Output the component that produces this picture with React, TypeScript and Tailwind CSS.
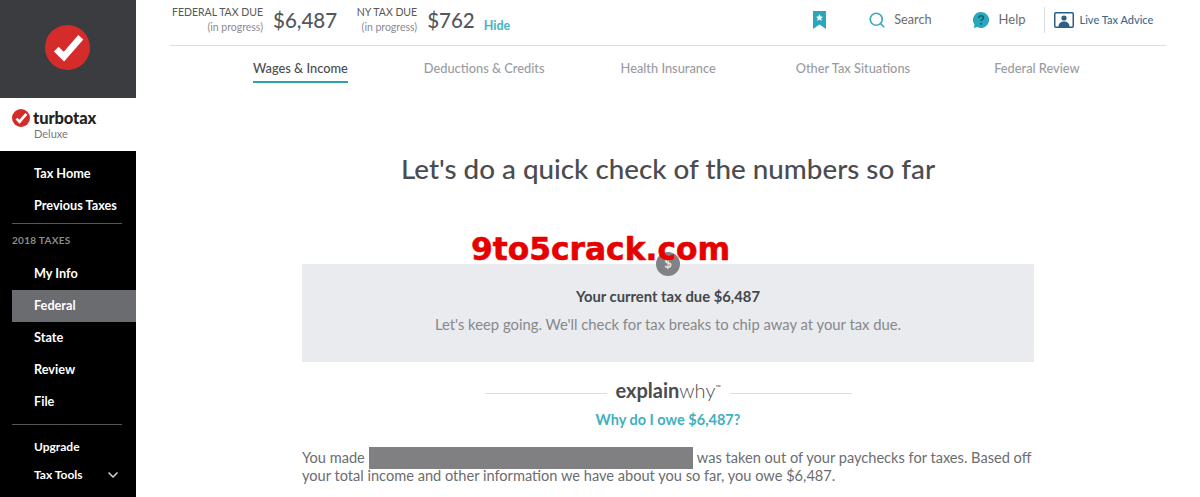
import { ChevronDown, Search } from 'lucide-react';

const font = { lato: 'font-["Lato","Noto_Sans",sans-serif]' };

function CheckBadge({ className }: { className: string }) {
  return (
    <svg className={className} viewBox="0 0 44 44">
      <circle cx="22" cy="22" r="22" fill="#d52b2b" />
      <path d="M11 23.5 L18.5 31 L35 12" fill="none" stroke="#fff" strokeWidth="6.5" />
    </svg>
  );
}

function NavItem({ label, active }: { label: string; active?: boolean }) {
  return (
    <div className={`ml-3 flex h-8 items-center pl-[22px] text-[12.7px] font-bold text-white ${active ? 'bg-[#6b6c70]' : ''}`}>
      {label}
    </div>
  );
}

function Sidebar() {
  return (
    <aside className="flex h-[497px] w-[136px] shrink-0 flex-col bg-black">
      <div className="flex h-[98px] items-center justify-center bg-[#3b3c3f] pb-[3px] pr-[2px]">
        <CheckBadge className="h-[45px] w-[45px]" />
      </div>
      <div className="h-[53px] bg-white pl-3 pt-[11px]">
        <div className="flex items-center gap-[3px]">
          <CheckBadge className="h-[18px] w-[18px]" />
          <span className="text-[16.5px] leading-[18px] font-black tracking-[-0.1px] text-[#222]">turbotax</span>
        </div>
        <div className="pl-[22px] text-[11px] leading-[13px] text-[#77797c]">Deluxe</div>
      </div>
      <nav className="pt-[7px]">
        <NavItem label="Tax Home" />
        <NavItem label="Previous Taxes" />
        <div className="ml-3 mr-3.5 mt-px h-px bg-[#55565a]" />
        <div className="ml-3 mt-[7px] h-[19px] text-[10px] leading-[19px] font-bold tracking-[0.3px] text-[#8b8c8f]">2018 TAXES</div>
        <div className="mt-2">
          <NavItem label="My Info" />
          <NavItem label="Federal" active />
          <NavItem label="State" />
          <NavItem label="Review" />
          <NavItem label="File" />
        </div>
        <div className="ml-3 mr-3.5 mt-[6px] h-px bg-[#55565a]" />
        <div className="mt-2 flex h-7 items-center pl-[34px] text-xs font-bold text-white">Upgrade</div>
        <div className="flex h-7 items-center justify-between pl-[34px] pr-[15px] text-xs font-bold text-white">
          Tax Tools
          <ChevronDown className="h-4 w-4 text-[#ccc]" strokeWidth={2.5} />
        </div>
      </nav>
    </aside>
  );
}

function TaxDue({ title, amount, width }: { title: string; amount: string; width: string }) {
  return (
    <div className="flex items-center">
      <div className={`${width} text-right text-[10.5px] leading-[15px] text-[#55575a]`}>
        <div className="whitespace-nowrap">{title}</div>
        <div className="text-[#8a8c8f]">(in progress)</div>
      </div>
      <div className="ml-2.5 text-[20.5px] font-medium leading-none text-[#55575a]">{amount}</div>
    </div>
  );
}

function TopBar() {
  return (
    <header className="flex h-[46px] items-center border-b border-[#dcdee0] pl-px pb-[5px]">
      <TaxDue title="FEDERAL TAX DUE" amount="$6,487" width="w-[92px]" />
      <div className="ml-[19px]">
        <TaxDue title="NY TAX DUE" amount="$762" width="w-[61px]" />
      </div>
      <a className="ml-[9px] mt-3 text-[12.5px] font-bold text-[#41b4c6]">Hide</a>

      <svg className="ml-[303px] h-[18px] w-[13px]" viewBox="0 0 13 18">
        <path d="M0 0H13V18L6.5 13.5L0 18Z" fill="#2aa7bd" />
        <path d="M6.5 3 7.6 5.6 10 5.8 8.2 7.5 8.8 10 6.5 8.6 4.2 10 4.8 7.5 3 5.8 5.4 5.6Z" fill="#fff" />
      </svg>
      <Search className="ml-[42px] h-[18px] w-[18px] text-[#3fa9c0]" strokeWidth={2.25} />
      <span className="ml-[8px] text-[12.7px] text-[#6b6d70]">Search</span>
      <svg className="ml-[41px] h-[16px] w-[16px]" viewBox="0 0 16 16">
        <path d="M8 0a8 8 0 1 1-3.6 15.1L0.6 16l1-3.2A8 8 0 0 1 8 0Z" fill="#2aa7bd" />
        <path d="M5.8 6c0-1.4 1-2.2 2.3-2.2s2.2.8 2.2 2c0 1.600-2.200 1.700-2.200 3.400" fill="none" stroke="#14606f" strokeWidth="1.600" />
        <circle cx="8.100" cy="11.700" r="1" fill="#14606f" />
      </svg>
      <span className="ml-2.5 text-[13px] text-[#6b6d70]">Help</span>
      <div className="ml-[18px] h-[26px] w-px bg-[#dcdee0]" />
      <svg className="ml-[9px] h-[16px] w-[20px]" viewBox="0 0 20 16">
        <rect x="0.75" y="0.75" width="18.5" height="14.5" rx="1" fill="#fff" stroke="#2d5f86" strokeWidth="1.5" />
        <circle cx="10" cy="6" r="2.6" fill="#2d5f86" />
        <path d="M4.5 15c0-4 2.5-5.500 5.500-5.500s5.500 1.500 5.500 5.500Z" fill="#2d5f86" />
      </svg>
      <span className="ml-1.5 whitespace-nowrap text-[11px] font-medium text-[#3d6a8c]">Live Tax Advice</span>
    </header>
  );
}

const tabs = [
  { label: 'Wages & Income', offset: 'ml-[83px]' },
  { label: 'Deductions & Credits', offset: 'ml-[76px]' },
  { label: 'Health Insurance', offset: 'ml-[76px]' },
  { label: 'Other Tax Situations', offset: 'ml-[80px]' },
  { label: 'Federal Review', offset: 'ml-[84px]' },
];

function Tabs() {
  return (
    <div className="flex text-[12.8px]">
      {tabs.map((tab, i) => (
        <div
          key={tab.label}
          className={`${tab.offset} h-[37px] pt-[13px] font-medium leading-[18px] ${i === 0 ? 'border-b-2 border-[#2aa3ad] text-[#4a4c4f]' : 'text-[#9a9c9f]'}`}
        >
          {tab.label}
        </div>
      ))}
    </div>
  );
}

export default function App() {
  return (
    <div className={`flex h-[497px] w-[1200px] overflow-hidden bg-white ${font.lato}`}>
      <Sidebar />
      <main className="ml-[34px] w-[996px] shrink-0">
        <TopBar />
        <Tabs />
        <h1 className="mt-[68px] text-center text-[27.8px] leading-[36px] font-medium text-[#4a4c4f]">
          Let's do a quick check of the numbers so far
        </h1>
        <div className="relative mx-auto mt-[77px] w-[732px]">
          <div className="absolute -top-3 left-[354px] flex h-6 w-6 items-center justify-center rounded-full bg-[#808285] text-[13px] font-bold text-[#e4e5e7]">
            $
          </div>
          {/* watermark sits across the top of the box */}
          <div className='absolute -top-[32px] left-[169px] z-10 whitespace-nowrap font-["DejaVu_Sans",sans-serif] text-[31.3px] leading-[34px] font-bold text-[#e60000] [-webkit-text-stroke:0.6px_#e60000]'>
            9to5crack.com
          </div>
          <div className="h-[98px] bg-[#e9ebee] pt-[22px] text-center text-[14.8px] leading-5">
            <p className="font-bold text-[#45474a]">Your current tax due $6,487</p>
            <p className="mt-2 text-[#86888b]">Let's keep going. We'll check for tax breaks to chip away at your tax due.</p>
          </div>

          <div className="mt-4 flex items-center justify-center">
            <div className="h-px w-[122px] translate-y-px bg-[#dcdee0]" />
            <div className="mx-[9px] w-[105px] text-[20px] leading-6 text-[#4a4c4f]">
              <span className="font-bold">explain</span>
              <span className="font-light">why</span>
              <span className="relative -top-2 text-[7px]">™</span>
            </div>
            <div className="h-px w-[122px] translate-y-px bg-[#dcdee0]" />
          </div>
          <p className="mt-[3px] text-center text-[14.5px] font-bold leading-5 text-[#3fb0bf]">Why do I owe $6,487?</p>

          <p className="mt-[19px] text-[14.6px] leading-[18px] text-[#6b6d70]">
            You made
            <span className="mx-1 -mb-1 inline-block h-[22px] w-[324px] -translate-y-[2px] bg-[#808083] align-top" />
            was taken out of your paychecks for taxes. Based off your total income and other information we have about you so far, you owe $6,487.
          </p>
        </div>
      </main>
    </div>
  );
}
